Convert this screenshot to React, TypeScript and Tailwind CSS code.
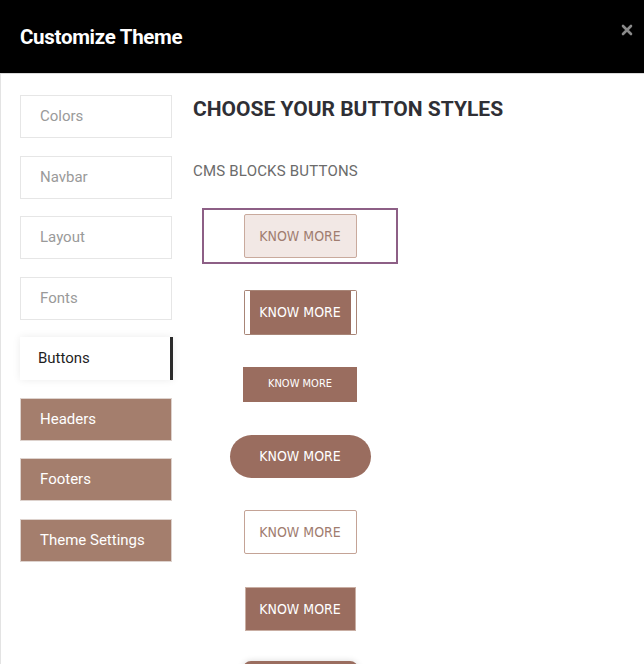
import React from 'react';

const navItems = [
  { label: 'Colors', kind: 'plain' },
  { label: 'Navbar', kind: 'plain' },
  { label: 'Layout', kind: 'plain' },
  { label: 'Fonts', kind: 'plain' },
  { label: 'Buttons', kind: 'active' },
  { label: 'Headers', kind: 'brown' },
  { label: 'Footers', kind: 'brown' },
  { label: 'Theme Settings', kind: 'brown' },
];

const btnFont = { fontFamily: '"DejaVu Sans Condensed", "DejaVu Sans", sans-serif' };

function NavItem({ label, kind }: { label: string; kind: string }) {
  if (kind === 'active') {
    return (
      <div className="h-[43px] w-[153px] flex items-center pl-[18px] bg-white border-r-[3px] border-[#2b2b2b] shadow-[0_0_8px_rgba(0,0,0,0.08)] text-[15px] text-[#1f1f1f]">
        {label}
      </div>
    );
  }
  if (kind === 'brown') {
    return (
      <div className="h-[43px] w-[152px] flex items-center pl-[19px] bg-[#a47e6d] border border-[#ddd2cd] text-[15px] text-white">
        {label}
      </div>
    );
  }
  return (
    <div className="h-[43px] w-[152px] flex items-center pl-[19px] bg-white border border-[#e6e6e6] text-[15px] text-[#9a9a9a]">
      {label}
    </div>
  );
}

function Option({ selected, className, children }: { selected?: boolean; className?: string; children: React.ReactNode }) {
  return (
    <div
      className={`h-[56px] w-[196px] flex items-center justify-center border-2 ${
        selected ? 'border-[#8d5f86]' : 'border-transparent'
      } ${className ?? ''}`}
    >
      {children}
    </div>
  );
}

export default function App() {
  return (
    <div className="w-[644px] h-[664px] overflow-hidden bg-white" style={{ fontFamily: 'Roboto, "Noto Sans", sans-serif' }}>
      {/* Header */}
      <div className="h-[74px] bg-black border-b border-[#d9d9d9] flex items-center justify-between pl-[20px] pr-[11px]">
        <h1 className="text-[20.5px] font-bold text-white tracking-[-0.3px] pt-[1px]">Customize Theme</h1>
        <svg width="12" height="12" viewBox="0 0 12 12" className="mb-[14px]">
          <path d="M2 2 L10 10 M10 2 L2 10" stroke="#8a8a8a" strokeWidth="2.6" strokeLinecap="round" />
        </svg>
      </div>

      <div className="flex h-[590px] border-l border-[#e3e3e3]">
        {/* Sidebar */}
        <div className="pl-[19px] pt-[21px] flex flex-col gap-[17.5px] w-[192px] shrink-0">
          {navItems.map((n) => (
            <NavItem key={n.label} label={n.label} kind={n.kind} />
          ))}
        </div>

        {/* Content */}
        <div className="pt-[21px] flex-1">
          <h2 className="text-[21px] leading-[28px] font-bold text-[#2f2f35]">CHOOSE YOUR BUTTON STYLES</h2>
          <p className="mt-[38px] text-[15px] tracking-[0.2px] leading-[20px] text-[#6b6b6b]">CMS BLOCKS BUTTONS</p>

          <div className="ml-[9px] flex flex-col">
            <Option selected className="mt-[27px]">
              <div
                className="w-[113px] h-[44px] flex items-center justify-center bg-[#f2e8e5] border border-[#c9aa9d] rounded-[2px] text-[14px] text-[#a07d70]"
                style={btnFont}
              >
                KNOW MORE
              </div>
            </Option>

            <Option className="mt-[20.5px]">
              <div className="w-[113px] h-[45px] p-px bg-[#a88577] rounded-[2px]">
                <div
                  className="h-full flex items-center justify-center bg-[#9a6d5f] border-x-[5px] border-white text-[14px] text-white"
                  style={btnFont}
                >
                  KNOW MORE
                </div>
              </div>
            </Option>

            <Option className="mt-[16px]">
              <div
                className="w-[114px] h-[35px] flex items-center justify-center bg-[#9a6d5f] text-[11px] text-white"
                style={btnFont}
              >
                KNOW MORE
              </div>
            </Option>

            <Option className="mt-[16px]">
              <div
                className="w-[141px] h-[43px] flex items-center justify-center bg-[#9a6d5f] rounded-full text-[14px] text-white"
                style={btnFont}
              >
                KNOW MORE
              </div>
            </Option>

            <Option className="mt-[19.5px]">
              <div
                className="w-[113px] h-[44px] flex items-center justify-center bg-white border border-[#c4a396] rounded-[2px] text-[14px] text-[#a07c6f]"
                style={btnFont}
              >
                KNOW MORE
              </div>
            </Option>

            <Option className="mt-[21px]">
              <div
                className="w-[111px] h-[44px] flex items-center justify-center bg-[#9a6d5f] border border-[#c9aea3] text-[14px] text-white"
                style={btnFont}
              >
                KNOW MORE
              </div>
            </Option>

            <Option className="mt-[18px]">
              <div
                className="w-[115px] h-[44px] flex items-center justify-center bg-[#9a6d5f] rounded-[8px] shadow-[0_0_6px_rgba(0,0,0,0.15)] text-[14px] text-white"
                style={btnFont}
              >
                KNOW MORE
              </div>
            </Option>
          </div>
        </div>
      </div>
    </div>
  );
}
